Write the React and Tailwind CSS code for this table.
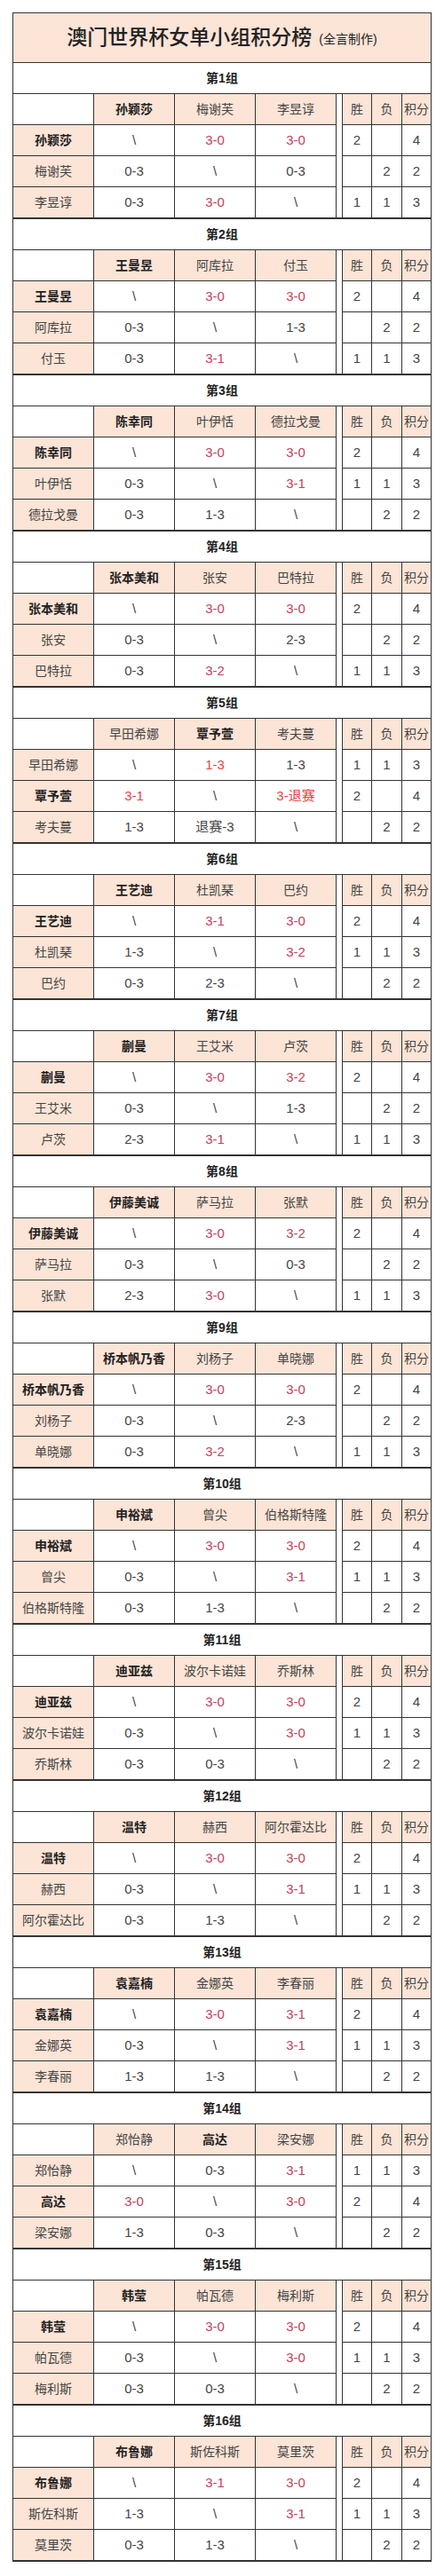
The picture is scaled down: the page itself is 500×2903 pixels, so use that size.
import React from "react";

// "*" = dark red score, "!" = bright red score
const groups = [
  {
    players: ["孙颖莎", "梅谢芙", "李昱谆"],
    top: 0,
    rows: [
      ["\\", "*3-0", "*3-0", "2", "", "4"],
      ["0-3", "\\", "0-3", "", "2", "2"],
      ["0-3", "*3-0", "\\", "1", "1", "3"],
    ],
  },
  {
    players: ["王曼昱", "阿库拉", "付玉"],
    top: 0,
    rows: [
      ["\\", "*3-0", "*3-0", "2", "", "4"],
      ["0-3", "\\", "1-3", "", "2", "2"],
      ["0-3", "*3-1", "\\", "1", "1", "3"],
    ],
  },
  {
    players: ["陈幸同", "叶伊恬", "德拉戈曼"],
    top: 0,
    rows: [
      ["\\", "*3-0", "*3-0", "2", "", "4"],
      ["0-3", "\\", "*3-1", "1", "1", "3"],
      ["0-3", "1-3", "\\", "", "2", "2"],
    ],
  },
  {
    players: ["张本美和", "张安", "巴特拉"],
    top: 0,
    rows: [
      ["\\", "*3-0", "*3-0", "2", "", "4"],
      ["0-3", "\\", "2-3", "", "2", "2"],
      ["0-3", "*3-2", "\\", "1", "1", "3"],
    ],
  },
  {
    players: ["早田希娜", "覃予萱", "考夫蔓"],
    top: 1,
    rows: [
      ["\\", "!1-3", "1-3", "1", "1", "3"],
      ["!3-1", "\\", "!3-退赛", "2", "", "4"],
      ["1-3", "退赛-3", "\\", "", "2", "2"],
    ],
  },
  {
    players: ["王艺迪", "杜凯琹", "巴约"],
    top: 0,
    rows: [
      ["\\", "*3-1", "*3-0", "2", "", "4"],
      ["1-3", "\\", "*3-2", "1", "1", "3"],
      ["0-3", "2-3", "\\", "", "2", "2"],
    ],
  },
  {
    players: ["蒯曼", "王艾米", "卢茨"],
    top: 0,
    rows: [
      ["\\", "*3-0", "*3-2", "2", "", "4"],
      ["0-3", "\\", "1-3", "", "2", "2"],
      ["2-3", "*3-1", "\\", "1", "1", "3"],
    ],
  },
  {
    players: ["伊藤美诚", "萨马拉", "张默"],
    top: 0,
    rows: [
      ["\\", "*3-0", "*3-2", "2", "", "4"],
      ["0-3", "\\", "0-3", "", "2", "2"],
      ["2-3", "*3-0", "\\", "1", "1", "3"],
    ],
  },
  {
    players: ["桥本帆乃香", "刘杨子", "单晓娜"],
    top: 0,
    rows: [
      ["\\", "*3-0", "*3-0", "2", "", "4"],
      ["0-3", "\\", "2-3", "", "2", "2"],
      ["0-3", "*3-2", "\\", "1", "1", "3"],
    ],
  },
  {
    players: ["申裕斌", "曾尖", "伯格斯特隆"],
    top: 0,
    rows: [
      ["\\", "*3-0", "*3-0", "2", "", "4"],
      ["0-3", "\\", "*3-1", "1", "1", "3"],
      ["0-3", "1-3", "\\", "", "2", "2"],
    ],
  },
  {
    players: ["迪亚兹", "波尔卡诺娃", "乔斯林"],
    top: 0,
    rows: [
      ["\\", "*3-0", "*3-0", "2", "", "4"],
      ["0-3", "\\", "*3-0", "1", "1", "3"],
      ["0-3", "0-3", "\\", "", "2", "2"],
    ],
  },
  {
    players: ["温特", "赫西", "阿尔霍达比"],
    top: 0,
    rows: [
      ["\\", "*3-0", "*3-0", "2", "", "4"],
      ["0-3", "\\", "*3-1", "1", "1", "3"],
      ["0-3", "1-3", "\\", "", "2", "2"],
    ],
  },
  {
    players: ["袁嘉楠", "金娜英", "李春丽"],
    top: 0,
    rows: [
      ["\\", "*3-0", "*3-1", "2", "", "4"],
      ["0-3", "\\", "*3-1", "1", "1", "3"],
      ["1-3", "1-3", "\\", "", "2", "2"],
    ],
  },
  {
    players: ["郑怡静", "高达", "梁安娜"],
    top: 1,
    rows: [
      ["\\", "0-3", "*3-1", "1", "1", "3"],
      ["*3-0", "\\", "*3-0", "2", "", "4"],
      ["1-3", "0-3", "\\", "", "2", "2"],
    ],
  },
  {
    players: ["韩莹", "帕瓦德", "梅利斯"],
    top: 0,
    rows: [
      ["\\", "*3-0", "*3-0", "2", "", "4"],
      ["0-3", "\\", "*3-0", "1", "1", "3"],
      ["0-3", "0-3", "\\", "", "2", "2"],
    ],
  },
  {
    players: ["布鲁娜", "斯佐科斯", "莫里茨"],
    top: 0,
    rows: [
      ["\\", "*3-1", "*3-0", "2", "", "4"],
      ["1-3", "\\", "*3-1", "1", "1", "3"],
      ["0-3", "1-3", "\\", "", "2", "2"],
    ],
  },
];

function Score({ v }) {
  if (v.startsWith("*"))
    return <span className="text-[#c2435e]">{v.slice(1)}</span>;
  if (v.startsWith("!"))
    return <span className="text-[#e8413f]">{v.slice(1)}</span>;
  return <span>{v}</span>;
}

const cell = "flex items-center justify-center";

function Group({ index, group }) {
  return (
    <div
      className="grid grid-cols-[90px_90px_90px_90px_6px_32px_33px_32px]
      auto-rows-[34px] gap-px pb-px bg-[#333]"
    >
      {/* group title */}
      <div className={`${cell} col-span-8 bg-white font-bold text-[14px] text-[#222]`}>
        第{index + 1}组
      </div>

      {/* header row */}
      <div className="bg-white" />
      {group.players.map((p, i) => (
        <div
          key={p}
          className={`${cell} bg-[#fce4d6] text-[14px] ${
            i === group.top ? "font-bold text-[#222]" : "text-[#444]"
          }`}
        >
          {p}
        </div>
      ))}
      <div className="row-span-4 bg-white" />
      <div className={`${cell} bg-[#fce4d6] text-[14px] text-[#444]`}>胜</div>
      <div className={`${cell} bg-[#fce4d6] text-[14px] text-[#444]`}>负</div>
      <div className={`${cell} bg-[#fce4d6] text-[14px] text-[#444] whitespace-nowrap`}>
        积分
      </div>

      {/* data rows */}
      {group.rows.map((r, ri) => (
        <React.Fragment key={ri}>
          <div
            className={`${cell} bg-[#fce4d6] text-[14px] whitespace-nowrap ${
              ri === group.top ? "font-bold text-[#222]" : "text-[#444]"
            }`}
          >
            {group.players[ri]}
          </div>
          {r.map((v, ci) => (
            <div key={ci} className={`${cell} bg-white text-[15px] text-[#444]`}>
              <Score v={v} />
            </div>
          ))}
        </React.Fragment>
      ))}
    </div>
  );
}

export default function App() {
  return (
    <div className="bg-white min-h-[2903px] pt-[14px] pl-[14px] font-['Liberation_Sans','Noto_Sans_CJK_SC',sans-serif]">
      <div className="w-[472px] bg-[#333] p-px flex flex-col gap-px">
        <div className="h-[55px] bg-[#fce4d6] flex items-center justify-center text-[#222]">
          <span className="text-[23px] font-medium">澳门世界杯女单小组积分榜</span>
          <span className="text-[14px] ml-2 mt-1">(全言制作)</span>
        </div>
        {groups.map((g, i) => (
          <Group key={i} index={i} group={g} />
        ))}
      </div>
    </div>
  );
}
